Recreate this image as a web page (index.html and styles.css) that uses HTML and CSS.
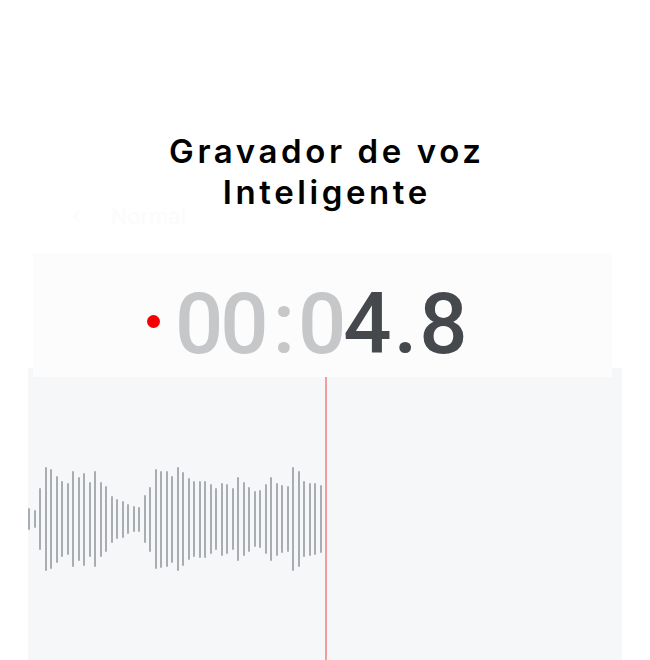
FILE: index.html
```html
<!DOCTYPE html>
<html lang="pt">
<head>
<meta charset="utf-8">
<title>Gravador de voz Inteligente</title>
<link rel="stylesheet" href="styles.css">
</head>
<body>
<div class="page">
  <h1 class="title">Gravador de voz<br>Inteligente</h1>
  <div class="ghost"><span class="ghost-arrow">&lsaquo;</span> Normal</div>
  <section class="timer-panel">
    <span class="rec-dot"></span>
    <span class="timer"><span class="dim">00<span class="colon">:</span>0</span><span class="lit">4<span class="point">.</span>8</span></span>
  </section>
  <section class="wave-panel">
    <div class="wave">
      <i style="height:22px"></i><i style="height:18px"></i><i style="height:62px"></i><i style="height:104px"></i><i style="height:100px"></i><i style="height:87px"></i><i style="height:76px"></i><i style="height:72px"></i><i style="height:96px"></i><i style="height:84px"></i><i style="height:93px"></i><i style="height:75px"></i><i style="height:96px"></i><i style="height:75px"></i><i style="height:66px"></i><i style="height:47px"></i><i style="height:40px"></i><i style="height:37px"></i><i style="height:30px"></i><i style="height:26px"></i><i style="height:25px"></i><i style="height:48px"></i><i style="height:65px"></i><i style="height:100px"></i><i style="height:97px"></i><i style="height:96px"></i><i style="height:87px"></i><i style="height:104px"></i><i style="height:94px"></i><i style="height:82px"></i><i style="height:76px"></i><i style="height:77px"></i><i style="height:77px"></i><i style="height:70px"></i><i style="height:62px"></i><i style="height:73px"></i><i style="height:70px"></i><i style="height:62px"></i><i style="height:84px"></i><i style="height:74px"></i><i style="height:65px"></i><i style="height:56px"></i><i style="height:58px"></i><i style="height:70px"></i><i style="height:84px"></i><i style="height:73px"></i><i style="height:68px"></i><i style="height:66px"></i><i style="height:104px"></i><i style="height:96px"></i><i style="height:76px"></i><i style="height:73px"></i><i style="height:72px"></i><i style="height:68px"></i>
    </div>
    <span class="playhead"></span>
  </section>
</div>
</body>
</html>
```
FILE: styles.css
```css
html, body {
  margin: 0;
  padding: 0;
  background: #ffffff;
}
.page {
  width: 650px;
  height: 660px;
  overflow: hidden;
  display: flex;
  flex-direction: column;
  font-family: "Inter", sans-serif;
}
.title {
  margin: 131px 0 0;
  padding-left: 3.6px;
  text-align: center;
  font-family: "Inter", sans-serif;
  font-weight: 600;
  font-size: 33px;
  line-height: 41px;
  color: #000;
  letter-spacing: 3.6px;
}
.ghost {
  height: 0;
  margin-left: 72px;
  margin-top: -8px;
  font-size: 22px;
  line-height: 22px;
  color: #fbfbfb;
  position: relative;
}
.ghost-arrow {
  margin-right: 24px;
}
.timer-panel {
  margin: 48px 38px -9px 33px;
  height: 124px;
  background: #fcfcfd;
  display: flex;
  align-items: center;
  padding-left: 114px;
  position: relative;
  z-index: 1;
}
.rec-dot {
  width: 13px;
  height: 13px;
  border-radius: 50%;
  background: #f30000;
  margin-right: 15px;
  margin-top: 12px;
}
.timer {
  font-family: "Roboto", sans-serif;
  font-weight: 500;
  font-size: 85px;
  line-height: 85px;
  letter-spacing: -3px;
  margin-top: 18px;
}
.colon {
  margin: 0 6px 0 7px;
}
.point {
  margin: 0 5px 0 5px;
}
.dim { color: #c6c7c9; }
.lit { color: #45484c; }
.wave-panel {
  margin: 0 28px;
  flex: 1;
  background: #f5f7f9;
  position: relative;
}
.wave {
  display: flex;
  align-items: center;
  gap: 3.5px;
  height: 104px;
  margin-top: 99px;
}
.wave i {
  display: block;
  width: 2px;
  border-radius: 1px;
  background: #a9adb1;
}
.playhead {
  position: absolute;
  left: 297px;
  top: 9px;
  bottom: 0;
  width: 1.5px;
  background: #f49c9c;
  z-index: 2;
}
```
